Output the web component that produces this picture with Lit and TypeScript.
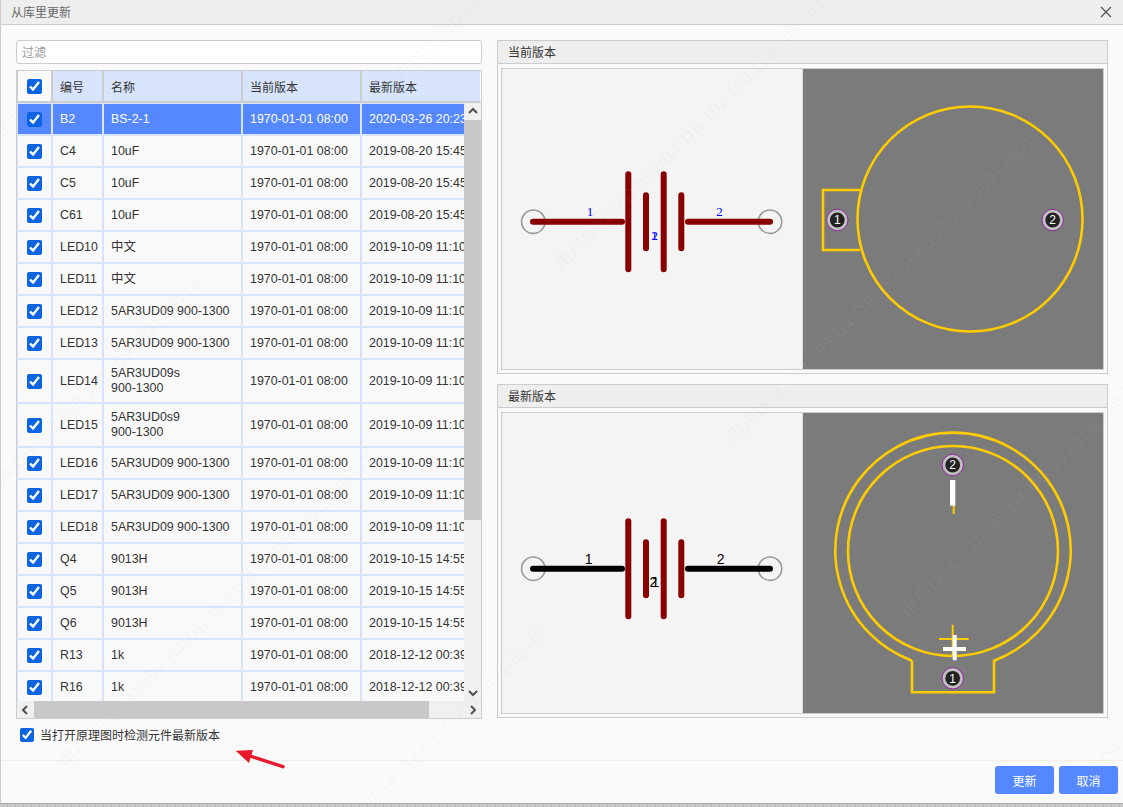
import { LitElement, css, html, svg } from 'lit'
import { customElement } from 'lit/decorators.js'

const CUR = '1970-01-01 08:00'
const LED = '5AR3UD09 900-1300'
const LED_T = '2019-10-09 11:10'
const ROWS: [string, string, string][] = [
  ['B2', 'BS-2-1', '2020-03-26 20:23'],
  ['C4', '10uF', '2019-08-20 15:45'],
  ['C5', '10uF', '2019-08-20 15:45'],
  ['C61', '10uF', '2019-08-20 15:45'],
  ['LED10', '中文', LED_T],
  ['LED11', '中文', LED_T],
  ['LED12', LED, LED_T],
  ['LED13', LED, LED_T],
  ['LED14', '5AR3UD09s\n900-1300', LED_T],
  ['LED15', '5AR3UD0s9\n900-1300', LED_T],
  ['LED16', LED, LED_T],
  ['LED17', LED, LED_T],
  ['LED18', LED, LED_T],
  ['Q4', '9013H', '2019-10-15 14:55'],
  ['Q5', '9013H', '2019-10-15 14:55'],
  ['Q6', '9013H', '2019-10-15 14:55'],
  ['R13', '1k', '2018-12-12 00:39'],
  ['R16', '1k', '2018-12-12 00:39'],
]

const WATERMARK = '用户D0:C5:D3:99:B4:DB 192.168.150.209 2021-08-17'

// tiled along the two diagonals, same lattice as the reference
function watermarks() {
  const out: { x: number; y: number }[] = []
  for (let i = -6; i < 8; i++) {
    for (let j = -3; j < 4; j++) {
      const x = 565 + 173 * i + 495 * j
      const y = 268 + 174 * i - 499 * j
      if (x > -500 && x < 1123 && y > 0 && y < 1300) out.push({ x, y })
    }
  }
  return out
}

function pad(x: number, y: number, label: string) {
  return svg`
    <circle cx=${x} cy=${y} r="10.7" fill="#c0c0c0" stroke="#8a1a9a" stroke-width="0.9"></circle>
    <circle cx=${x} cy=${y} r="7.4" fill="#222"></circle>
    <text x=${x} y=${y + 4.4} class="pad-no">${label}</text>
  `
}

// the battery symbol is the same in both versions, only y and pin colour move
function battery(cy: number, pin: string) {
  const bar = (x: number, h: number) =>
    svg`<line x1=${x} x2=${x} y1=${cy - h} y2=${cy + h} stroke="#880000" stroke-width="6" stroke-linecap="round"></line>`
  return svg`
    <circle cx="533.3" cy=${cy} r="11.7" fill="none" stroke="#999" stroke-width="1.6"></circle>
    <circle cx="770" cy=${cy} r="11.7" fill="none" stroke="#999" stroke-width="1.6"></circle>
    <line x1="533" x2="622" y1=${cy} y2=${cy} stroke=${pin} stroke-width="6" stroke-linecap="round"></line>
    <line x1="688" x2="770" y1=${cy} y2=${cy} stroke=${pin} stroke-width="6" stroke-linecap="round"></line>
    ${bar(628.3, 47.5)}
    ${bar(646, 26.5)}
    ${bar(663.7, 47.5)}
    ${bar(681.3, 26.5)}
  `
}

@customElement('app-root')
export class AppRoot extends LitElement {
  static styles = css`
    :host {
      display: block;
      width: 1123px;
      height: 807px;
      overflow: hidden;
      position: relative;
      font-family: 'Liberation Sans', 'Noto Sans CJK SC', sans-serif;
      font-size: 12px;
      color: #333;
    }

    .dialog {
      height: 803px;
      box-sizing: border-box;
      border-left: 1px solid #ccc;
      background: #fafafa;
      display: flex;
      flex-direction: column;
    }

    .titlebar {
      height: 23px;
      flex: none;
      background: #eee;
      border-bottom: 1px solid #ccc;
      display: flex;
      align-items: center;
      justify-content: space-between;
      padding: 0 11px 1px 10px;
      box-sizing: content-box;
      color: #666;
    }
    .titlebar svg { display: block; }

    .main {
      flex: 1;
      display: flex;
      gap: 15px;
      padding: 15px 15px 0 15px;
      min-height: 0;
    }

    .left { width: 466px; flex: none; display: flex; flex-direction: column; }
    .right { width: 611px; flex: none; display: flex; flex-direction: column; gap: 10px; }

    .filter {
      box-sizing: border-box;
      width: 100%;
      height: 24px;
      border: 1px solid #ccc;
      border-radius: 3px;
      background: #fff;
      padding: 2px 5px 0;
      font: inherit;
      outline: none;
    }
    .filter::placeholder { color: #999; }

    .table {
      box-sizing: border-box;
      margin-top: 6px;
      height: 649px;
      border: 1px solid #ccc;
      display: flex;
      flex-direction: column;
      background: #fff;
    }

    .cols {
      display: grid;
      grid-template-columns: 33px 49px 137px 117px 1fr;
      column-gap: 2px;
      padding-left: 1px;
    }

    .head {
      height: 30px;
      flex: none;
      background: #ccc;
      border-bottom: 2px solid #ccc;
      border-right: 1px solid #fff;
    }
    .head > div {
      background: #d8e4fc;
      display: flex;
      align-items: center;
      padding-left: 7px;
    }
    .head > .check, .row > .check {
      padding: 0;
      justify-content: center;
    }
    .head > .check { background: #fafafa; }

    .middle { flex: 1; display: flex; min-height: 0; }

    .viewport {
      flex: 1;
      overflow: hidden;
      background: #d8e4fc;
      padding-top: 1px;
      font-size: 12.4px;
    }

    .row { margin-bottom: 2px; min-height: 30px; }
    .row > div {
      background: #f9f9f9;
      display: flex;
      align-items: center;
      padding-left: 7px;
      line-height: 15px;
      overflow: hidden;
      white-space: pre-line;
    }
    .row > .latest { white-space: nowrap; }
    .row.tall { min-height: 42px; }
    .row.selected > div { background: #5588ff; color: #fff; }

    input[type='checkbox'] {
      width: 15px;
      height: 15px;
      margin: 0;
      accent-color: #0b65e3;
    }

    .vbar {
      width: 17px;
      flex: none;
      background: #f0f0f0;
      display: flex;
      flex-direction: column;
    }
    .vthumb { height: 400px; background: #c8c8c8; }
    .vspace { flex: 1; }

    .hbar {
      height: 17px;
      flex: none;
      background: #f0f0f0;
      display: flex;
    }
    .hthumb { width: 395px; background: #c8c8c8; }
    .hspace { flex: 1; }
    .sb-btn {
      width: 17px;
      height: 17px;
      flex: none;
      display: flex;
      align-items: center;
      justify-content: center;
    }
    .sb-btn svg { display: block; }

    .option {
      margin: 8px 0 0 4px;
      display: flex;
      align-items: center;
      gap: 6px;
      height: 15px;
    }
    .option input { width: 14px; height: 14px; }

    .panel {
      box-sizing: border-box;
      height: 334px;
      border: 1px solid #ccc;
      display: flex;
      flex-direction: column;
    }
    .panel-head {
      height: 23px;
      flex: none;
      background: #eee;
      border-bottom: 1px solid #ccc;
      display: flex;
      align-items: center;
      padding: 0 0 1px 10px;
      box-sizing: border-box;
    }
    .canvas {
      margin: 4px 3px 0;
      border: 1px solid #ccc;
      display: flex;
      gap: 1px;
      background: #ddd;
    }
    .canvas svg { display: block; width: 300px; height: 300px; }
    .sch { background: #f4f4f4; }
    .pcb { background: #7b7b7b; }
    .pin-blue { font: 13px 'Liberation Serif', serif; fill: #00f; text-anchor: middle; }
    .pin-black { font: 14px 'Liberation Sans', sans-serif; fill: #000; text-anchor: middle; }
    .pad-no { font: 12px 'Liberation Sans', sans-serif; fill: #fff; text-anchor: middle; }

    .footer {
      height: 43px;
      flex: none;
      box-sizing: border-box;
      border-top: 1px solid #eee;
      display: flex;
      justify-content: flex-end;
      align-items: flex-start;
      gap: 5px;
      padding: 5px 5px 0 0;
    }
    button {
      width: 59px;
      height: 28px;
      border: 0;
      border-radius: 3px;
      background: #5588ff;
      color: #fff;
      font: inherit;
      padding: 0;
    }

    .edge {
      height: 4px;
      background: repeating-linear-gradient(90deg, #c9c9c9 0 7px, #b4b4b4 7px 8px);
      border-top: 1px solid #a9a9a9;
      box-sizing: border-box;
    }

    .arrow {
      position: absolute;
      left: 230px;
      top: 745px;
      pointer-events: none;
    }

    .mark {
      position: absolute;
      white-space: nowrap;
      font: 18px 'Liberation Serif', 'Noto Sans CJK SC', serif;
      letter-spacing: 0.7px;
      color: rgba(190, 190, 190, 0.1);
      transform: rotate(-45deg);
      transform-origin: 0 100%;
      pointer-events: none;
    }
  `

  private _check() {
    return html`<input type="checkbox" .checked=${true} />`
  }

  private _chevron(dir: 'up' | 'down' | 'left' | 'right') {
    const pts = {
      up: '1,6 5,2 9,6',
      down: '1,3 5,7 9,3',
      left: '6,1 2,5 6,9',
      right: '3,1 7,5 3,9',
    }[dir]
    return html`<div class="sb-btn">
      <svg width="10" height="10" viewBox="0 0 10 10">
        <polyline points=${pts} fill="none" stroke="#505050" stroke-width="2"></polyline>
      </svg>
    </div>`
  }

  private _table() {
    return html`
      <div class="table">
        <div class="cols head">
          <div class="check">${this._check()}</div>
          <div>编号</div>
          <div>名称</div>
          <div>当前版本</div>
          <div>最新版本</div>
        </div>
        <div class="middle">
          <div class="viewport">
            ${ROWS.map(
              ([id, name, latest], i) => html`
                <div class="cols row ${name.includes('\n') ? 'tall' : ''} ${i === 0 ? 'selected' : ''}">
                  <div class="check">${this._check()}</div>
                  <div>${id}</div>
                  <div>${name}</div>
                  <div>${CUR}</div>
                  <div class="latest">${latest}</div>
                </div>
              `,
            )}
          </div>
          <div class="vbar">
            ${this._chevron('up')}
            <div class="vthumb"></div>
            <div class="vspace"></div>
            ${this._chevron('down')}
          </div>
        </div>
        <div class="hbar">
          ${this._chevron('left')}
          <div class="hthumb"></div>
          <div class="hspace"></div>
          ${this._chevron('right')}
        </div>
      </div>
    `
  }

  private _current() {
    return html`
      <div class="panel">
        <div class="panel-head">当前版本</div>
        <div class="canvas">
          <svg class="sch" viewBox="502 69 300 300">
            ${battery(221.7, '#880000')}
            <text x="590" y="216" class="pin-blue">1</text>
            <text x="719.5" y="216" class="pin-blue">2</text>
            <text x="654.5" y="240" class="pin-blue">1</text>
            <text x="654.8" y="240" class="pin-blue">2</text>
          </svg>
          <svg class="pcb" viewBox="803 69 300 300">
            <circle cx="970" cy="219" r="112.5" fill="none" stroke="#ffcc00" stroke-width="2.6"></circle>
            <path d="M860 190H823V250H860" fill="none" stroke="#ffcc00" stroke-width="2.6"></path>
            ${pad(837.3, 220, '1')}
            ${pad(1052.7, 220, '2')}
          </svg>
        </div>
      </div>
    `
  }

  private _latest() {
    return html`
      <div class="panel">
        <div class="panel-head">最新版本</div>
        <div class="canvas">
          <svg class="sch" viewBox="502 413 300 300">
            ${battery(568.7, '#000')}
            <text x="588.7" y="564" class="pin-black">1</text>
            <text x="720.7" y="564" class="pin-black">2</text>
            <text x="655.5" y="587" class="pin-black">1</text>
            <text x="653.5" y="587" class="pin-black">2</text>
          </svg>
          <svg class="pcb" viewBox="803 413 300 300">
            <circle cx="953" cy="551" r="105" fill="none" stroke="#ffcc00" stroke-width="2.6"></circle>
            <path
              d="M912 660.7V692.3H994V660.7A117.7 117.7 0 1 0 912 660.7"
              fill="none"
              stroke="#ffcc00"
              stroke-width="2.6"
            ></path>
            <path d="M953.7 505V514M952.7 624.7V655M939 639H968.7" fill="none" stroke="#ffcc00" stroke-width="2"></path>
            <path d="M950 480h5.3v25.7h-5.3zM952.7 635h4v25.3h-4zM943 647h23v4h-23z" fill="#fff"></path>
            ${pad(952.7, 465, '2')}
            ${pad(952.7, 678.3, '1')}
          </svg>
        </div>
      </div>
    `
  }

  render() {
    return html`
      <div class="dialog">
        <div class="titlebar">
          <span>从库里更新</span>
          <svg width="12" height="12" viewBox="0 0 12 12">
            <path d="M1 1L11 11M11 1L1 11" stroke="#555" stroke-width="1.3" fill="none"></path>
          </svg>
        </div>
        <div class="main">
          <div class="left">
            <input class="filter" placeholder="过滤" />
            ${this._table()}
            <label class="option">${this._check()}当打开原理图时检测元件最新版本</label>
          </div>
          <div class="right">
            ${this._current()}
            ${this._latest()}
          </div>
        </div>
        <div class="footer">
          <button>更新</button>
          <button>取消</button>
        </div>
      </div>
      <div class="edge"></div>

      <svg class="arrow" width="60" height="28" viewBox="230 745 60 28">
        <path d="M283 766.7L247 755" stroke="#e8192c" stroke-width="3.4" stroke-linecap="round" fill="none"></path>
        <path d="M235.7 750.7L253 750L249 763Z" fill="#e8192c"></path>
      </svg>

      ${watermarks().map(
        (m) => html`<span class="mark" style="left:${m.x}px;top:${m.y - 20}px">${WATERMARK}</span>`,
      )}
    `
  }
}
